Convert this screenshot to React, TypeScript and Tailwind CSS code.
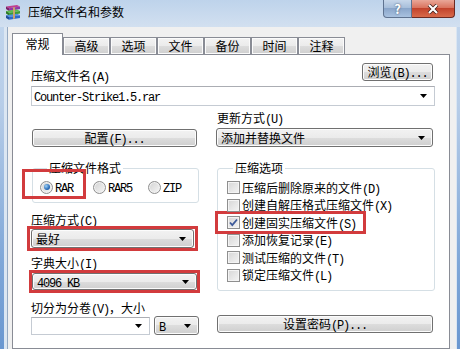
import React from "react";

const CJK = "font-['Noto_Sans_CJK_SC',sans-serif] text-[12px] leading-[14px] text-black";
const MONO = "font-['Liberation_Mono','Noto_Sans_CJK_SC',monospace] text-[12px] tracking-[-1.2px]";
const BTN =
  "flex items-center justify-center rounded-[3px] border border-[#707070] bg-[linear-gradient(#f2f2f2,#ebebeb_50%,#dddddd_50%,#cfcfcf)] shadow-[inset_0_0_0_1px_#fcfcfc]";

// split mixed text so ascii gets the narrow mono font
function T({ s }: { s: string }) {
  const parts = s.match(/[\x20-\x7e]+|[^\x20-\x7e]+/g) ?? [];
  return (
    <>
      {parts.map((p, i) =>
        /^[\x20-\x7e]/.test(p) ? (
          <span key={i} className={MONO}>
            {p}
          </span>
        ) : (
          <span key={i}>{p}</span>
        )
      )}
    </>
  );
}

function Label({ s, className = "" }: { s: string; className?: string }) {
  return (
    <div className={`h-[14px] whitespace-nowrap ${className}`}>
      <T s={s} />
    </div>
  );
}

function Arrow() {
  return (
    <svg width="7" height="4" viewBox="0 0 7 4" className="shrink-0">
      <path d="M0 0h7L3.5 4z" fill="#000" />
    </svg>
  );
}

function Button({ text, className = "" }: { text: string; className?: string }) {
  return (
    <div className={`${BTN} ${className}`}>
      <div className="h-[14px] whitespace-nowrap">
        <T s={text} />
      </div>
    </div>
  );
}

function Select({ text, className = "" }: { text: string; className?: string }) {
  return (
    <div className={`${BTN} !justify-between pl-[4px] pr-[7px] ${className}`}>
      <div className="h-[14px] whitespace-nowrap">
        <T s={text} />
      </div>
      <Arrow />
    </div>
  );
}

function Edit({ text, className = "" }: { text: string; className?: string }) {
  return (
    <div
      className={`flex items-center justify-between border border-[#c5cbd3] border-t-[#abadb3] bg-white pl-[2px] pr-[7px] ${className}`}
    >
      <div className="h-[14px] whitespace-nowrap">
        <T s={text} />
      </div>
      <Arrow />
    </div>
  );
}

function Check({ checked = false }: { checked?: boolean }) {
  return (
    <div className="flex h-[13px] w-[13px] shrink-0 items-center justify-center border border-[#8f8f8f] bg-[linear-gradient(135deg,#d6d6d6,#f4f4f4)] shadow-[inset_0_0_0_1px_#f4f4f4]">
      {checked && (
        <svg width="11" height="11" viewBox="0 0 11 11">
          <path d="M2 5.5l2.3 2.6L9 2.5" stroke="#3d5a9a" strokeWidth="1.8" fill="none" />
        </svg>
      )}
    </div>
  );
}

function Radio({ checked = false }: { checked?: boolean }) {
  return (
    <div className="flex h-[13px] w-[13px] shrink-0 items-center justify-center rounded-full border border-[#8f8f8f] bg-[linear-gradient(135deg,#d2d2d2,#f6f6f6)] shadow-[inset_0_0_0_1px_#f2f2f2]">
      {checked && (
        <div className="h-[6px] w-[6px] rounded-full bg-[radial-gradient(circle_at_35%_35%,#9fd2f7,#2a6cb8_60%,#174f94)]" />
      )}
    </div>
  );
}

function Group({
  title,
  legendMl,
  className = "",
  children,
}: {
  title: string;
  legendMl: string;
  className?: string;
  children: React.ReactNode;
}) {
  return (
    <fieldset className={`rounded-[3px] border border-[#d5dfe5] ${className}`}>
      <legend className={`h-[14px] px-[2px] ${legendMl}`}>{title}</legend>
      {children}
    </fieldset>
  );
}

function WinRarIcon() {
  return (
    <svg width="16" height="16" viewBox="0 0 16 16">
      <path d="M1 2.5l11-1.5 3 1.5-11 1.8z" fill="#c03f8e" />
      <path d="M1 2.5l3 1.8v2.6L1 5.1z" fill="#7a2268" />
      <path d="M4 4.3l11-1.8v2.6L4 6.9z" fill="#8e3aa8" />
      <path d="M1 7l11-1.5 3 1.5-11 1.8z" fill="#5bbf4a" />
      <path d="M1 7l3 1.8v2.6L1 9.6z" fill="#2d7a25" />
      <path d="M4 8.8l11-1.8v2.6L4 11.4z" fill="#3f9d35" />
      <path d="M1 11.3l11-1.5 3 1.5-11 1.8z" fill="#4f8fe0" />
      <path d="M1 11.3l3 1.8v2.6L1 13.9z" fill="#1d4c9a" />
      <path d="M4 13.1l11-1.8v2.6L4 15.7z" fill="#2d6ac8" />
      <path d="M8 3.6l2-.3v11.3l-2 .3z" fill="#c9a36a" />
    </svg>
  );
}

const TABS = ["高级", "选项", "文件", "备份", "时间", "注释"];

const OPTIONS: [string, boolean][] = [
  ["压缩后删除原来的文件(D)", false],
  ["创建自解压格式压缩文件(X)", false],
  ["创建固实压缩文件(S)", true],
  ["添加恢复记录(E)", false],
  ["测试压缩的文件(T)", false],
  ["锁定压缩文件(L)", false],
];

export default function App() {
  return (
    <div
      className={`flex h-[349px] w-[460px] flex-col overflow-hidden bg-[linear-gradient(#c3d7ee,#b7cde8_30%,#7fa7d8_75%,#6a97d0)] ${CJK}`}
    >
      {/* title bar */}
      <div className="flex h-[27px] shrink-0 items-start bg-[linear-gradient(#bed3eb,#d2e0f0)]">
        <div className="ml-[5px] mt-[4px]">
          <WinRarIcon />
        </div>
        <div className="ml-[7px] mt-[5px] text-[12px]">压缩文件名和参数</div>
        <div className="ml-auto mr-[5px] flex">
          <div className="flex h-[18px] w-[29px] items-center justify-center rounded-bl-[4px] border border-t-0 border-[#5f7390] bg-[linear-gradient(#c7d7ea,#a4bcd9_50%,#8aa6ca_50%,#a9c2e0)] text-[13px] font-bold text-white [text-shadow:0_0_2px_#34465f]">
            ?
          </div>
          <div className="flex h-[18px] w-[43px] items-center justify-center rounded-br-[4px] border border-l-0 border-t-0 border-[#6b2a22] bg-[linear-gradient(#e9a798,#d86e58_50%,#c2432c_50%,#d86a4a)]">
            <svg width="12" height="10" viewBox="0 0 12 10">
              <path d="M2 1l8 8M10 1L2 9" stroke="#3b1a16" strokeWidth="3.6" />
              <path d="M2 1l8 8M10 1L2 9" stroke="#fff" strokeWidth="2.2" />
            </svg>
          </div>
        </div>
      </div>

      {/* frame + client */}
      <div className="flex flex-1 pl-[4px] pr-[3px]">
        <div className="flex flex-1 bg-[#dbe6f2] pl-[3px] pr-[1px]">
          <div className="flex flex-1 flex-col border-l border-[#95a9c2] bg-[#f0f0f0] pl-[4px] pr-[6px] pt-[6px]">
            {/* tabs */}
            <div className="flex h-[21px] items-end">
              <div className="relative z-10 -mb-px flex h-[22px] w-[51px] items-center justify-center border border-b-0 border-[#898c95] bg-white pb-[2px]">
                常规
              </div>
              {TABS.map((t) => (
                <div
                  key={t}
                  className="flex h-[17px] w-[47px] items-center justify-center border border-b-0 border-[#898c95] bg-[linear-gradient(#f3f3f3,#ebebeb_50%,#dddddd_50%,#cfcfcf)] shadow-[inset_0_0_0_1px_#fbfbfb]"
                >
                  {t}
                </div>
              ))}
            </div>

            {/* panel */}
            <div className="flex-1 border border-[#898c95] bg-white pl-[18px] pr-[14px] pt-[8px]">
              <div className="flex h-[18px] items-end justify-between">
                <Label s="压缩文件名(A)" className="-mb-[2px]" />
                <Button text="浏览(B)..." className="mr-[2px] h-[18px] w-[71px]" />
              </div>
              <Edit text="Counter-Strike1.5.rar" className="mt-[5px] h-[20px]" />

              <div className="flex gap-[18px]">
                {/* left column */}
                <div className="flex w-[168px] flex-col">
                  <Button text="配置(F)..." className="ml-[1px] mt-[23px] h-[18px] w-[165px]" />
                  <Group title="压缩文件格式" legendMl="ml-[7px]" className="ml-[1px] mt-[14px] w-[167px] pb-[8px] pl-[7px] pt-[5px]">
                    <div className="flex h-[14px] items-start">
                      <div className="-ml-[18px] -mt-[11px] flex h-[30px] w-[64px] shrink-0 items-start border-[3px] border-[#d23b3d] pl-[15px] pt-[8px]">
                        <div className="flex h-[14px] items-center gap-[2px]">
                          <Radio checked />
                          <Label s="RAR" />
                        </div>
                      </div>
                      <div className="ml-[7px] flex h-[14px] items-center gap-[2px]">
                        <Radio />
                        <Label s="RAR5" />
                      </div>
                      <div className="ml-[16px] flex h-[14px] items-center gap-[2px]">
                        <Radio />
                        <Label s="ZIP" />
                      </div>
                    </div>
                  </Group>
                  <Label s="压缩方式(C)" className="mt-[10px]" />
                  <div className="-ml-[4px] -mt-px h-[25px] w-[171px] border-[3px] border-[#d23b3d] px-[1px]">
                    <Select text="最好" className="h-[19px]" />
                  </div>
                  <Label s="字典大小(I)" className="mt-[5px]" />
                  <div className="-ml-[2px] h-[23px] w-[171px] border-[3px] border-[#d23b3d]">
                    <Select text="4096 KB" className="h-[17px]" />
                  </div>
                  <Label s="切分为分卷(V)，大小" className="mt-[8px]" />
                  <div className="mt-[2px] flex items-start">
                    <Edit text="" className="h-[18px] w-[119px]" />
                    <Select text="B" className="-mt-px ml-[4px] h-[19px] w-[45px]" />
                  </div>
                </div>

                {/* right column */}
                <div className="flex w-[218px] flex-col">
                  <Label s="更新方式(U)" className="mt-[5px]" />
                  <Select text="添加并替换文件" className="-ml-px mt-[3px] h-[19px] w-[217px]" />
                  <Group title="压缩选项" legendMl="ml-[6px]" className="mt-[14px] w-[218px] pb-[6px] pl-[9px] pt-[4px]">
                    {OPTIONS.map(([label, checked]) =>
                      checked ? (
                        <div
                          key={label}
                          className="-mb-[2.5px] -ml-[12px] -mt-[3px] flex h-[23px] w-[151px] items-center gap-[2px] border-[3px] border-[#d23b3d] pl-[9px]"
                        >
                          <Check checked />
                          <Label s={label} />
                        </div>
                      ) : (
                        <div key={label} className="flex h-[17.5px] items-center gap-[2px]">
                          <Check />
                          <Label s={label} />
                        </div>
                      )
                    )}
                  </Group>
                  <Button text="设置密码(P)..." className="mt-[24px] h-[18px] w-[216px]" />
                </div>
              </div>
            </div>
          </div>
        </div>
      </div>
    </div>
  );
}
